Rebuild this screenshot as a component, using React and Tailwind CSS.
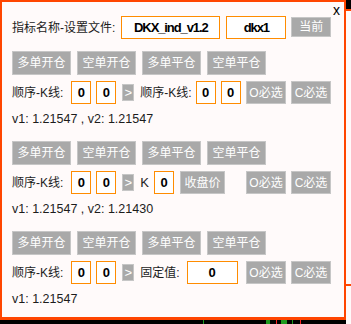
import React from "react";

const btn =
  "shrink-0 whitespace-nowrap flex items-center justify-center bg-[#a9a9a9] border border-[#c6c6c6] text-white text-[12px] leading-none";
const box =
  "shrink-0 whitespace-nowrap flex items-center justify-center border border-[#ff8c00] bg-white text-black font-bold text-[13px] leading-none";
const label = "shrink-0 whitespace-nowrap";

function ActionButtons() {
  return (
    <div className="flex gap-[6px] h-[24px]">
      {["多单开仓", "空单开仓", "多单平仓", "空单平仓"].map((t) => (
        <div key={t} className={`${btn} w-[59px] h-[24px]`}>
          {t}
        </div>
      ))}
    </div>
  );
}

function Zero() {
  return <div className={`${box} w-[20px] h-[23px]`}>0</div>;
}

function Arrow() {
  return <div className={`${btn} w-[12px] h-[17px] ml-[6px] text-[13px]`}>&gt;</div>;
}

function OC() {
  return (
    <div className="ml-auto flex gap-[5px] shrink-0">
      <div className={`${btn} w-[40px] h-[23px]`}>O必选</div>
      <div className={`${btn} w-[40px] h-[23px]`}>C必选</div>
    </div>
  );
}

function Group({ children, values }) {
  return (
    <div className="flex flex-col">
      <ActionButtons />
      <div className="flex items-center h-[23px] mt-[6px] text-[12px] text-[#1c1c1c]">
        <span className={`${label} mr-[8px]`}>顺序-K线:</span>
        <Zero />
        <div className="ml-[5px] shrink-0">
          <Zero />
        </div>
        <Arrow />
        {children}
        <OC />
      </div>
      <div className="h-[16px] mt-[7px] flex items-center whitespace-nowrap text-[12.5px] text-[#1c1c1c]">{values}</div>
    </div>
  );
}

export default function App() {
  return (
    <div className="w-[351px] h-[324px] flex bg-black overflow-hidden font-['Liberation_Sans','Noto_Sans_CJK_SC',sans-serif]">
      <div className="w-[346px] shrink-0 flex flex-col">
        <div className="relative w-[346px] h-[320px] border-2 border-b-[3px] border-[#ff4500] bg-[#fffafa] pl-[10px] pr-[13px] pt-[14px]">
          <div className="absolute top-[1px] right-[4px] text-[14px] leading-none text-black">x</div>

          <div className="flex items-center h-[23px]">
            <span className={`${label} text-[12px] text-[#1c1c1c]`}>指标名称-设置文件:</span>
            <div className={`${box} ml-[6px] w-[99px] h-[23px] tracking-[-1.1px]`}>DKX_ind_v1.2</div>
            <div className={`${box} ml-[6px] w-[60px] h-[23px] tracking-[-1.1px]`}>dkx1</div>
            <div className={`${btn} ml-[5px] w-[40px] h-[20px] -mt-[2px]`}>当前</div>
          </div>

          <div className="flex flex-col gap-[14px] mt-[12px]">
            <Group values="v1: 1.21547 , v2: 1.21547">
              <span className={`${label} ml-[6px] mr-[4px]`}>顺序-K线:</span>
              <Zero />
              <div className="ml-[5px] shrink-0">
                <Zero />
              </div>
            </Group>
            <Group values="v1: 1.21547 , v2: 1.21430">
              <span className={`${label} ml-[6px] mr-[5px] text-[13px]`}>K</span>
              <Zero />
              <div className={`${btn} ml-[6px] w-[45px] h-[23px]`}>收盘价</div>
            </Group>
            <Group values="v1: 1.21547">
              <span className={`${label} ml-[6px] mr-[7px]`}>固定值:</span>
              <div className={`${box} w-[51px] h-[23px]`}>0</div>
            </Group>
          </div>
        </div>
        <svg width="346" height="4" className="block">
          <rect x="0" y="0" width="346" height="4" fill="#000" />
          <rect x="203" y="0" width="1" height="4" fill="#1e9a1e" />
          <rect x="266" y="0" width="4" height="4" fill="#1e9a1e" />
          <rect x="276" y="0" width="1" height="4" fill="#ff2020" />
          <rect x="281" y="0" width="6" height="4" fill="#1e9a1e" />
          <rect x="292" y="0" width="1" height="4" fill="#1e9a1e" />
          <rect x="300" y="0" width="1" height="4" fill="#ff2020" />
        </svg>
      </div>
      <div className="w-[5px] shrink-0 flex flex-col">
        <div className="h-[9px] bg-black" />
        <div className="h-[2px] bg-[#ff4500]" />
        <div className="h-[273px] bg-[#fffafa]" />
        <div className="h-[2px] bg-[#ff4500]" />
        <div className="flex-1 bg-[#fffafa]" />
      </div>
    </div>
  );
}
